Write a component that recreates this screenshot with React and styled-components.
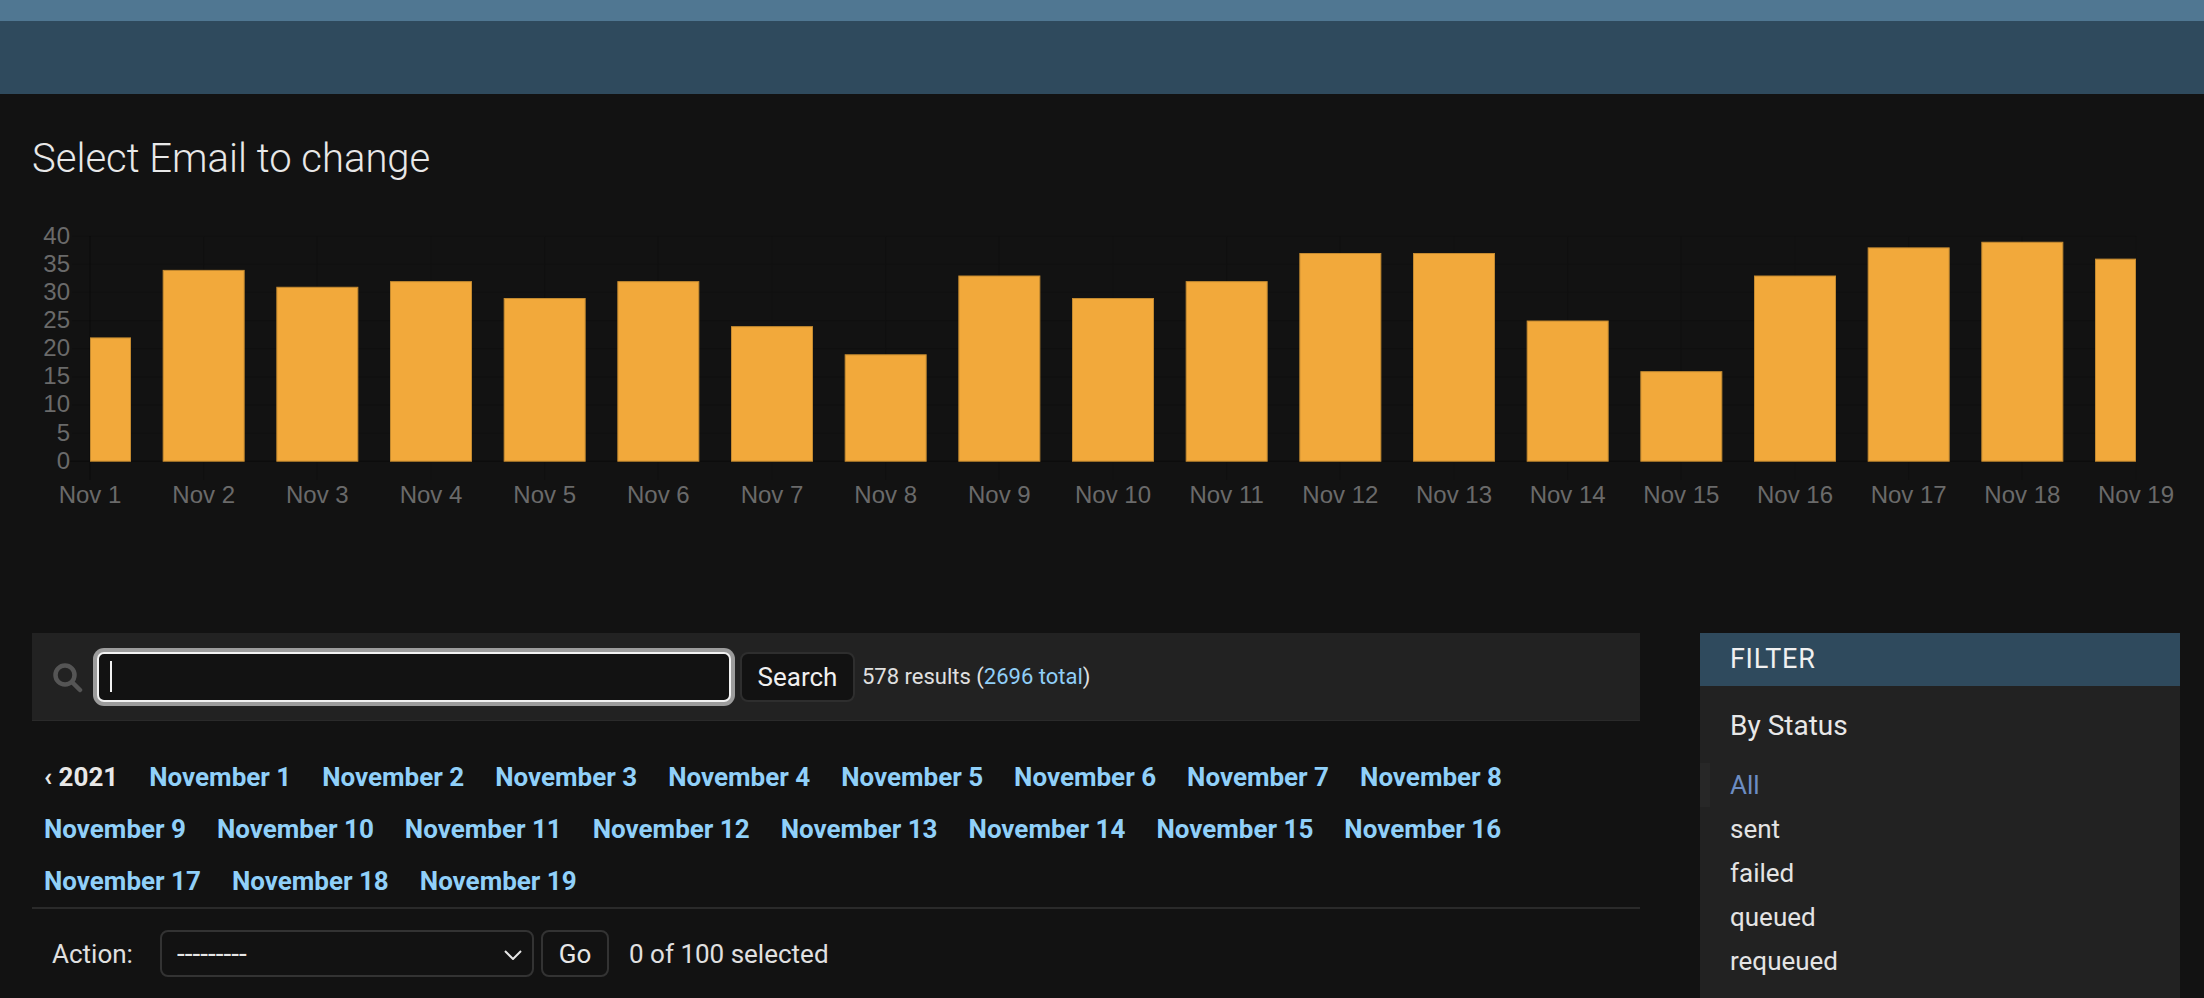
import React from "react";
import styled, { createGlobalStyle } from "styled-components";

const Global = createGlobalStyle`
  html, body { margin: 0; padding: 0; background: #121212; height: 100%; overflow: hidden; }
  body { font-family: Roboto, "Liberation Sans", sans-serif; color: #e6e6e6; }
`;

const Page = styled.div`display: flex; flex-direction: column; height: 998px; overflow: hidden; background: #121212;`;
const TopStrip = styled.div`height: 21px; background: #507792; flex: none;`;
const Header = styled.header`height: 73px; background: #2f4a5d; flex: none;`;
const Content = styled.main`flex: 1; min-height: 0; padding: 0 24px 0 32px; display: flex; flex-direction: column;`;
const Title = styled.h1`margin: 42px 0 0; font-size: 40px; line-height: 46px; font-weight: 300; color: #e8e8e8;`;
const ChartWrap = styled.div`margin: 28px 0 0 -32px; height: 423px; flex: none;`;
const Chart = styled.svg`display: block;`;
const Columns = styled.div`flex: 1; min-height: 0; display: flex; gap: 60px;`;
const Left = styled.section`flex: 1; min-width: 0;`;
const Toolbar = styled.form`height: 87px; background: #222; border-bottom: 1px solid #2a2a2a; display: flex; align-items: center; padding-left: 21px; font-size: 22px;`;
const SearchIcon = styled.svg`width: 30px; height: 30px; flex: none; margin: 3px 14px 0 0;`;
const InputWrap = styled.div`position: relative; display: flex;`;
const SearchInput = styled.input`
  width: 634px; height: 50px; box-sizing: border-box; background: #121212; border: 2px solid #f2f2f2;
  border-radius: 7px; box-shadow: 0 0 0 4px #9c9c9c; color: #eee; outline: none; font: 22px Roboto, sans-serif;
`;
const Caret = styled.span`position: absolute; left: 13px; top: 9px; width: 2px; height: 31px; background: #f0f0f0;`;
const SearchButton = styled.button`
  margin-left: 9px; width: 115px; height: 50px; background: #121212; border: 2px solid #2e2e2e; border-radius: 8px;
  color: #f0f0f0; font: 400 26px Roboto, sans-serif; padding: 0;
`;
const Results = styled.span`margin-left: 7px; font-size: 22px; color: #e0e0e0;`;
const TotalLink = styled.a`color: #90cff8; text-decoration: none;`;
const DateNav = styled.nav`display: flex; flex-wrap: wrap; column-gap: 31px; padding: 30px 12px 0; line-height: 52px; height: 156px; align-content: flex-start; font-size: 26px; font-weight: 700; border-bottom: 2px solid #2a2a2a; box-sizing: content-box;`;
const Year = styled.a`color: #e8e8e8;`;
const DateLink = styled.a`color: #90d0f9;`;
const Actions = styled.div`display: flex; align-items: center; height: 47px; margin-top: 21px; padding-left: 20px; font-size: 26px; color: #e0e0e0;`;
const ActionLabel = styled.label`width: 108px; flex: none;`;
const SelectWrap = styled.div`position: relative; display: flex;`;
const ActionSelect = styled.select`
  appearance: none; width: 374px; height: 47px; background: #121212; border: 2px solid #333; border-radius: 8px;
  color: #e6e6e6; font: 400 28px Roboto, sans-serif; padding: 0 15px;
`;
const Chevron = styled.svg`position: absolute; right: 12px; top: 20px; pointer-events: none;`;
const GoButton = styled.button`
  margin-left: 7px; width: 68px; height: 47px; background: #121212; border: 2px solid #333; border-radius: 8px;
  color: #e6e6e6; font: 400 26px Roboto, sans-serif; padding: 0;
`;
const Selected = styled.span`margin-left: 20px;`;
const Filter = styled.aside`width: 480px; flex: none; background: #222; align-self: stretch;`;
const FilterHead = styled.h2`margin: 0; height: 53px; line-height: 53px; padding-left: 30px; background: #2f4a5d; color: #f0f0f0; font-size: 27px; font-weight: 400; letter-spacing: 0.7px;`;
const FilterTitle = styled.h3`margin: 0; padding: 22px 0 0 30px; font-size: 28px; line-height: 36px; font-weight: 400; color: #e8e8e8;`;
const FilterList = styled.ul`list-style: none; margin: 19px 0 0; padding: 0;`;
const FilterItem = styled.li`
  height: 44px; line-height: 44px; padding-left: 30px; font-size: 26px;
  color: ${p => (p.$active ? "#6d8dc2" : "#e4e4e4")};
  background: ${p => (p.$active ? "linear-gradient(90deg, #272727 10px, transparent 10px)" : "none")};
`;

const values = [22,34,31,32,29,32,24,19,33,29,32,37,37,25,16,33,38,39,36];
const left = 90, right = 2136, base = 461.2, unit = 5.627, barW = 82;
const step = (right - left) / 18;
const yTicks = [0,5,10,15,20,25,30,35,40];

function BarChart() {
  return (
    <Chart width="2204" height="330" viewBox="0 210 2204 330">
      {yTicks.map(t => {
        const y = base - t * unit;
        return <line key={t} x1={t === 0 ? 70 : 72} x2={right} y1={y} y2={y} stroke={t === 0 ? "#0b0b0b" : "#101010"} strokeWidth="1" />;
      })}
      {values.map((_, i) => {
        const x = left + i * step;
        return <line key={i} x1={x} x2={x} y1={base - 40 * unit} y2={480} stroke={i === 0 ? "#0b0b0b" : "#101010"} strokeWidth="1" />;
      })}
      {values.map((v, i) => {
        const cx = left + i * step;
        const x0 = Math.max(left, cx - barW / 2);
        const x1 = Math.min(right, cx + barW / 2);
        return <rect key={i} x={x0 + 0.5} y={base - v * unit + 0.5} width={x1 - x0 - 1} height={v * unit - 0.5} fill="#f2a93b" stroke="#c48a30" strokeWidth="1" />;
      })}
      <g fill="#6a6a6a" fontFamily="'Liberation Sans', sans-serif" fontSize="24">
        {yTicks.map(t => <text key={t} x="70" y={base - t * unit + 7.5} textAnchor="end">{t}</text>)}
        {values.map((_, i) => <text key={i} x={left + i * step} y="503" textAnchor="middle">{`Nov ${i + 1}`}</text>)}
      </g>
    </Chart>
  );
}

const days = Array.from({ length: 19 }, (_, i) => `November ${i + 1}`);

export default function App() {
  return (
    <Page>
      <Global />
      <TopStrip />
      <Header />
      <Content>
        <Title>Select Email to change</Title>
        <ChartWrap><BarChart /></ChartWrap>
        <Columns>
          <Left>
            <Toolbar onSubmit={e => e.preventDefault()}>
              <SearchIcon viewBox="0 0 30 30" fill="none" stroke="#555">
                <circle cx="12" cy="12" r="9.5" strokeWidth="4.5" />
                <path d="M19.5 19.5l7.5 7.5" strokeWidth="4.5" strokeLinecap="round" />
              </SearchIcon>
              <InputWrap>
                <SearchInput type="text" />
                <Caret />
              </InputWrap>
              <SearchButton type="button">Search</SearchButton>
              <Results>578 results (<TotalLink>2696 total</TotalLink>)</Results>
            </Toolbar>
            <DateNav>
              <Year>‹ 2021</Year>
              {days.map(d => <DateLink key={d}>{d}</DateLink>)}
            </DateNav>
            <Actions>
              <ActionLabel>Action:</ActionLabel>
              <SelectWrap>
                <ActionSelect defaultValue="">
                  <option value="">---------</option>
                </ActionSelect>
                <Chevron width="18" height="10" viewBox="0 0 18 10" fill="none" stroke="#e6e6e6" strokeWidth="2"><path d="M1 1l8 8 8-8" /></Chevron>
              </SelectWrap>
              <GoButton type="button">Go</GoButton>
              <Selected>0 of 100 selected</Selected>
            </Actions>
          </Left>
          <Filter>
            <FilterHead>FILTER</FilterHead>
            <FilterTitle>By Status</FilterTitle>
            <FilterList>
              <FilterItem $active>All</FilterItem>
              <FilterItem>sent</FilterItem>
              <FilterItem>failed</FilterItem>
              <FilterItem>queued</FilterItem>
              <FilterItem>requeued</FilterItem>
            </FilterList>
          </Filter>
        </Columns>
      </Content>
    </Page>
  );
}
